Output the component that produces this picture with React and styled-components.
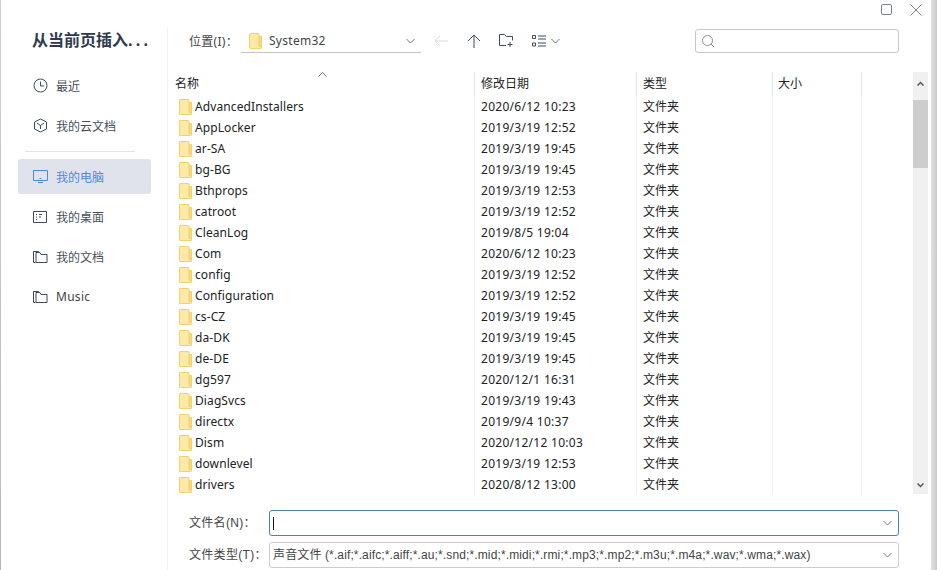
import React from 'react'
import styled, { createGlobalStyle } from 'styled-components'

const GlobalStyle = createGlobalStyle`
    html, body { margin: 0; padding: 0; background: #fff; }
    body {
        font-family: "Noto Sans", "Noto Sans CJK SC", sans-serif;
        font-size: 12px;
        color: #333;
    }
`
const Page = styled.div`
    width: 937px;
    height: 570px;
    display: flex;
    overflow: hidden;
`
const LeftEdge = styled.div`
    width: 1px;
    background: linear-gradient(#d0d0d0, #b8b8b8);
`
const RightEdge = styled.div`
    width: 6px;
    background: linear-gradient(90deg, #e4e4e4, #c8c8c8);
`
const Sidebar = styled.aside`
    width: 166px;
    height: 542px;
    margin-top: 28px;
    border-right: 1px solid #f0f1f3;
    box-sizing: content-box;
`
const SideTitle = styled.h1`
    margin: 0;
    padding-left: 31px;
    height: 40px;
    line-height: 24px;
    font-size: 16px;
    font-weight: 700;
    color: #2f3a4e;
    white-space: nowrap;
`
const TitleDots = styled.span`
    letter-spacing: 3.3px;
`
const SideList = styled.nav`
    padding-left: 17px;
    display: flex;
    flex-direction: column;
`
const SideItem = styled.div`
    width: 133px;
    height: 35px;
    margin-bottom: 5px;
    box-sizing: border-box;
    padding-left: 15px;
    display: flex;
    align-items: center;
    gap: 8px;
    border-radius: 3px;
    color: ${props => props.active ? '#4f86ec' : '#4a4f5a'};
    background: ${props => props.active ? '#e0e3eb' : 'transparent'};
`
const SideDivider = styled.div`
    width: 110px;
    height: 1px;
    margin: 3px 0 7px 7px;
    background: #e2e4e8;
`
const Main = styled.main`
    flex: 1;
    display: flex;
    flex-direction: column;
    min-width: 0;
`
const TitleBar = styled.div`
    height: 29px;
    padding: 4px 9px 0 0;
    box-sizing: border-box;
    display: flex;
    justify-content: flex-end;
    align-items: flex-start;
    gap: 17px;
`
const Toolbar = styled.div`
    height: 43px;
    padding-left: 21px;
    display: flex;
    align-items: flex-start;
`
const ToolLabel = styled.span`
    width: 52px;
    line-height: 25px;
    color: #444;
    letter-spacing: .3px;
    white-space: nowrap;
`
const LocationBox = styled.div`
    width: 180px;
    height: 24px;
    box-sizing: border-box;
    padding: 0 6px 0 8px;
    display: flex;
    align-items: center;
    gap: 7px;
    border-bottom: 1px solid #c4c4c4;
`
const Grow = styled.span`
    flex: 1;
`
const ToolIcons = styled.div`
    margin-left: 13px;
    height: 23px;
    display: flex;
    align-items: center;
    gap: 18.7px;
`
const ViewSwitch = styled.div`
    display: flex;
    align-items: center;
    gap: 5px;
`
const SearchBox = styled.div`
    width: 204px;
    height: 24px;
    margin-left: 135px;
    box-sizing: border-box;
    padding-left: 5px;
    display: flex;
    align-items: center;
    border: 1px solid #c8c8c8;
    border-radius: 3px;
`
const Content = styled.div`
    height: 422px;
    display: flex;
`
const Table = styled.div`
    width: 745px;
    position: relative;
    overflow: hidden;
`
const SortArrow = styled.svg`
    position: absolute;
    left: 150px;
    top: 0;
`
const Row = styled.div`
    display: grid;
    grid-template-columns: 307px 162px 136px 89px;
    height: ${props => props.head ? '24px' : '21px'};
    color: #222;
`
const Cell = styled.div`
    display: flex;
    align-items: center;
    padding-left: ${props => props.first ? '7px' : props.last ? '5px' : '6px'};
    gap: ${props => props.first ? '3px' : '0'};
    box-sizing: border-box;
    white-space: nowrap;
    border-right: 1px solid ${props => props.head ? '#e4e4e4' : '#edf3f9'};
`
const CjkText = styled.span`
    margin-bottom: 2px;
`
const Latin = styled.span`
    letter-spacing: ${props => props.tight ? '.1px' : '.28px'};
    color: ${props => props.muted ? '#444' : '#222'};
`
const FolderSvg = styled.svg`
    flex: none;
    margin-left: ${props => props.inset ? '4px' : '0'};
`
const Scrollbar = styled.div`
    width: 15px;
    background: #f0f0f0;
    display: flex;
    flex-direction: column;
    align-items: center;
`
const ScrollButton = styled.div`
    height: ${props => props.bottom ? '17px' : '28px'};
    width: 100%;
    display: flex;
    justify-content: center;
    align-items: ${props => props.bottom ? 'center' : 'flex-start'};
    padding-top: ${props => props.bottom ? '0' : '9px'};
    box-sizing: border-box;
`
const ScrollThumb = styled.div`
    width: 100%;
    height: 68px;
    background: #cdcdcd;
`
const ScrollTrack = styled.div`
    flex: 1;
`
const Footer = styled.div`
    padding: 16px 0 0 21px;
    display: flex;
    flex-direction: column;
    gap: 6px;
    font-family: "Liberation Sans", "Noto Sans CJK SC", sans-serif;
`
const FieldRow = styled.div`
    display: flex;
    align-items: center;
`
const FieldLabel = styled.label`
    width: 80px;
    margin-bottom: 3px;
    color: #444;
    letter-spacing: .3px;
    white-space: nowrap;
`
const Field = styled.div`
    width: 630px;
    height: 26px;
    box-sizing: border-box;
    padding: 0 6px 0 3px;
    display: flex;
    align-items: center;
    border: 1px solid ${props => props.focused ? '#4a7fc1' : '#cccccc'};
    border-radius: 3px;
    color: #444;
    white-space: nowrap;
`
const FieldText = styled.span`
    margin-bottom: 3px;
    letter-spacing: .125px;
`
const Caret = styled.span`
    width: 1px;
    height: 13px;
    background: #111;
`

const rows = [
    ['AdvancedInstallers', '2020/6/12 10:23'],
    ['AppLocker', '2019/3/19 12:52'],
    ['ar-SA', '2019/3/19 19:45'],
    ['bg-BG', '2019/3/19 19:45'],
    ['Bthprops', '2019/3/19 12:53'],
    ['catroot', '2019/3/19 12:52'],
    ['CleanLog', '2019/8/5 19:04'],
    ['Com', '2020/6/12 10:23'],
    ['config', '2019/3/19 12:52'],
    ['Configuration', '2019/3/19 12:52'],
    ['cs-CZ', '2019/3/19 19:45'],
    ['da-DK', '2019/3/19 19:45'],
    ['de-DE', '2019/3/19 19:45'],
    ['dg597', '2020/12/1 16:31'],
    ['DiagSvcs', '2019/3/19 19:43'],
    ['directx', '2019/9/4 10:37'],
    ['Dism', '2020/12/12 10:03'],
    ['downlevel', '2019/3/19 12:53'],
    ['drivers', '2020/8/12 13:00'],
]

const stroke = '#3d4a63'

const ClockIcon = () => (
    <svg width="15" height="15" viewBox="0 0 15 15" fill="none" stroke={stroke}>
        <circle cx="7.5" cy="7.5" r="6.5" />
        <path d="M7.5 3.5v4.5h3.5" />
    </svg>
)
const CubeIcon = () => (
    <svg width="15" height="15" viewBox="0 0 15 15" fill="none" stroke={stroke}>
        <path d="M7.5 1l6 3v7l-6 3-6-3V4z" />
        <path d="M4 5l3.5 2.5L11 5M7.5 7.5V11" />
    </svg>
)
const MonitorIcon = () => (
    <svg width="15" height="15" viewBox="0 0 15 15" fill="none" stroke="#4f86ec">
        <path d="M.5 1.5h14v10H.5z" />
        <path d="M5 13.5h5M6.5 9.5h2" />
    </svg>
)
const DeskIcon = () => (
    <svg width="15" height="15" viewBox="0 0 15 15" fill="none" stroke={stroke}>
        <path d="M.5 2.5h13v11H.5z" />
        <path d="M3 5.5h1M6 5.5h3M3 8h1M6 8h2M3 10.5h1" />
    </svg>
)
const FoldersIcon = () => (
    <svg width="15" height="15" viewBox="0 0 15 15" fill="none" stroke={stroke}>
        <path d="M2.5 13.5h-2v-11h5l1 1" />
        <path d="M3 13.5v-10h4l1 2h6v8z" />
    </svg>
)
const FolderIcon = ({ inset }) => (
    <FolderSvg inset={inset} width="13" height="16" viewBox="0 0 13 16">
        <path d="M.5 1a.5.5 0 0 1 .5-.5h8.500a.5.5 0 0 1 .5.5v12.500h2.500v1.500a.5.5 0 0 1-.5.5H1a.5.5 0 0 1-.5-.5z" fill="#fdeaa8" stroke="#f3d26e" />
        <path d="M10.500 3.500h2v10h-2z" fill="#f8dc85" stroke="#f3d26e" />
    </FolderSvg>
)
const Chevron = ({ color = '#6b7280' }) => (
    <svg width="9" height="6" viewBox="0 0 9 6" fill="none" stroke={color}>
        <path d="M.5 1l4 4 4-4" />
    </svg>
)
const ScrollArrow = ({ up }) => (
    <svg width="7" height="5" viewBox="0 0 7 5" fill="none" stroke="#555" strokeWidth="1.5">
        <path d={up ? 'M.5 4.500l3-3 3 3' : 'M.5.5l3 3 3-3'} />
    </svg>
)

const App = () => (
    <Page>
        <GlobalStyle />
        <LeftEdge />
        <Sidebar>
            <SideTitle>从当前页插入<TitleDots>...</TitleDots></SideTitle>
            <SideList>
                <SideItem><ClockIcon />最近</SideItem>
                <SideItem><CubeIcon />我的云文档</SideItem>
                <SideDivider />
                <SideItem active><MonitorIcon />我的电脑</SideItem>
                <SideItem><DeskIcon />我的桌面</SideItem>
                <SideItem><FoldersIcon />我的文档</SideItem>
                <SideItem><FoldersIcon /><Latin muted>Music</Latin></SideItem>
            </SideList>
        </Sidebar>
        <Main>
            <TitleBar>
                <svg width="12" height="12" viewBox="0 0 12 12" fill="none" stroke="#7b8494">
                    <rect x=".5" y=".5" width="10" height="10" rx="1.5" />
                </svg>
                <svg width="12" height="12" viewBox="0 0 12 12" fill="none" stroke="#7b8494">
                    <path d="M.5.5l11 11M11.500.5l-11 11" />
                </svg>
            </TitleBar>
            <Toolbar>
                <ToolLabel>位置(I)：</ToolLabel>
                <LocationBox>
                    <FolderIcon />
                    <Latin muted>System32</Latin>
                    <Grow />
                    <Chevron />
                </LocationBox>
                <ToolIcons>
                    <svg width="14" height="12" viewBox="0 0 14 12" fill="none" stroke="#d5d8de">
                        <path d="M14 6H1M6 1L1 6l5 5" />
                    </svg>
                    <svg width="14" height="14" viewBox="0 0 14 14" fill="none" stroke={stroke}>
                        <path d="M7 14V1M1 7l6-6 6 6" />
                    </svg>
                    <svg width="14" height="13" viewBox="0 0 14 13" fill="none" stroke={stroke}>
                        <path d="M7 11.500H.5v-11h5l2 2h6v4" />
                        <path d="M11 8v5M8.500 10.500h5" />
                    </svg>
                    <ViewSwitch>
                        <svg width="14" height="12" viewBox="0 0 14 12" fill="none" stroke={stroke}>
                            <path d="M.5.5h3v3h-3zM.5 8h3v3h-3zM6 1h8M6 4h8M6 8h8M6 11h8" />
                        </svg>
                        <Chevron />
                    </ViewSwitch>
                </ToolIcons>
                <SearchBox>
                    <svg width="14" height="14" viewBox="0 0 14 14" fill="none" stroke="#8a8f98">
                        <circle cx="6.500" cy="6.500" r="5" />
                        <path d="M10 10l3 3" />
                    </svg>
                </SearchBox>
            </Toolbar>
            <Content>
                <Table>
                    <SortArrow width="9" height="5" viewBox="0 0 9 5" fill="none" stroke="#777">
                        <path d="M.5 4.500l4-4 4 4" />
                    </SortArrow>
                    <Row head>
                        <Cell first head><CjkText>名称</CjkText></Cell>
                        <Cell head><CjkText>修改日期</CjkText></Cell>
                        <Cell head><CjkText>类型</CjkText></Cell>
                        <Cell last head><CjkText>大小</CjkText></Cell>
                    </Row>
                    {rows.map(([name, date]) => (
                        <Row key={name}>
                            <Cell first><FolderIcon inset /><Latin tight>{name}</Latin></Cell>
                            <Cell><Latin>{date}</Latin></Cell>
                            <Cell><CjkText>文件夹</CjkText></Cell>
                            <Cell last />
                        </Row>
                    ))}
                </Table>
                <Scrollbar>
                    <ScrollButton><ScrollArrow up /></ScrollButton>
                    <ScrollThumb />
                    <ScrollTrack />
                    <ScrollButton bottom><ScrollArrow /></ScrollButton>
                </Scrollbar>
            </Content>
            <Footer>
                <FieldRow>
                    <FieldLabel>文件名(N)：</FieldLabel>
                    <Field focused>
                        <Caret />
                        <Grow />
                        <Chevron />
                    </Field>
                </FieldRow>
                <FieldRow>
                    <FieldLabel>文件类型(T)：</FieldLabel>
                    <Field>
                        <FieldText>声音文件 (*.aif;*.aifc;*.aiff;*.au;*.snd;*.mid;*.midi;*.rmi;*.mp3;*.mp2;*.m3u;*.m4a;*.wav;*.wma;*.wax)</FieldText>
                        <Grow />
                        <Chevron />
                    </Field>
                </FieldRow>
            </Footer>
        </Main>
        <RightEdge />
    </Page>
)

export default App
